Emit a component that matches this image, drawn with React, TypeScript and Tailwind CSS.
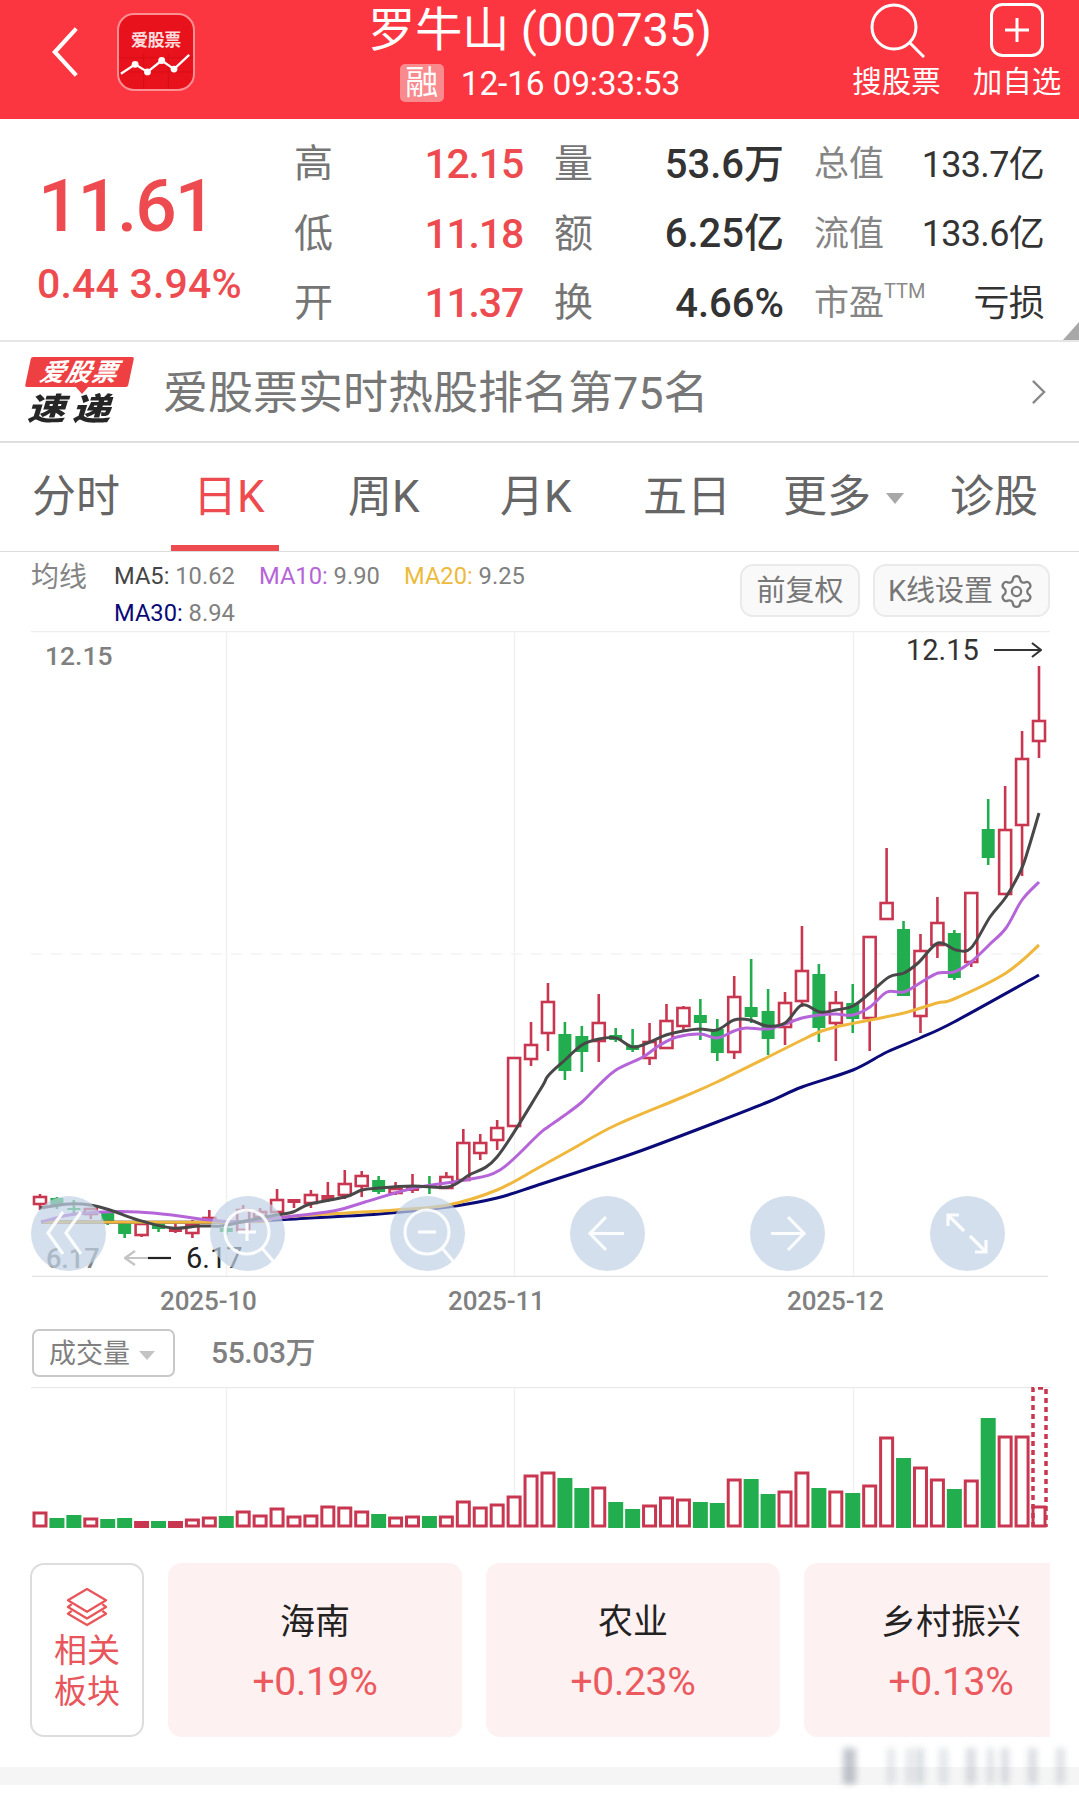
import React from "react";
import { Settings } from "lucide-react";

const RED = "#c93650";
const GREEN = "#22ae4e";

// [isRed, wickTop, wickBottom, bodyTop, bodyBottom, filled]
const candles: number[][] = [
  [1, 1194, 1210, 1197, 1204, 0],[0, 1197, 1209, 1198, 1206, 0],[0, 1200, 1215, 1208, 1210, 0],[1, 1208, 1219, 1209, 1214, 0],
  [0, 1212, 1225, 1213, 1221, 0],[0, 1222, 1238, 1223, 1234, 0],[1, 1223, 1237, 1224, 1235, 0],[0, 1222, 1232, 1224, 1229, 0],
  [1, 1223, 1233, 1227, 1232, 1],[1, 1220, 1238, 1225, 1233, 0],[1, 1210, 1223, 1218, 1222, 0],[0, 1227, 1235, 1228, 1232, 0],
  [1, 1205, 1230, 1210, 1230, 0],[1, 1208, 1222, 1212, 1217, 0],[1, 1189, 1213, 1200, 1212, 0],[1, 1199, 1208, 1199, 1203, 1],
  [1, 1190, 1208, 1195, 1203, 0],[1, 1182, 1202, 1195, 1200, 1],[1, 1170, 1199, 1184, 1195, 0],[1, 1171, 1197, 1176, 1186, 0],
  [0, 1176, 1194, 1180, 1192, 0],[1, 1182, 1195, 1189, 1193, 0],[1, 1174, 1193, 1187, 1191, 1],[0, 1176, 1194, 1186, 1188, 0],
  [1, 1172, 1188, 1177, 1188, 0],[1, 1129, 1180, 1143, 1180, 0],[1, 1134, 1160, 1143, 1153, 0],[1, 1120, 1150, 1128, 1140, 0],
  [1, 1058, 1126, 1058, 1126, 0],[1, 1022, 1066, 1045, 1059, 0],[1, 983, 1051, 1002, 1033, 0],[0, 1022, 1080, 1034, 1071, 0],
  [0, 1026, 1072, 1036, 1052, 0],[1, 994, 1062, 1023, 1041, 0],[0, 1028, 1042, 1035, 1040, 0],[0, 1029, 1052, 1045, 1050, 0],
  [1, 1023, 1065, 1042, 1058, 0],[1, 1004, 1048, 1021, 1048, 0],[1, 1006, 1030, 1008, 1026, 0],[0, 999, 1040, 1015, 1023, 0],
  [0, 1019, 1061, 1029, 1053, 0],[1, 976, 1059, 997, 1052, 0],[0, 959, 1023, 1007, 1017, 0],[0, 989, 1055, 1011, 1039, 0],
  [1, 992, 1045, 1003, 1027, 0],[1, 926, 1007, 971, 1001, 0],[0, 964, 1042, 974, 1028, 0],[1, 991, 1061, 1003, 1023, 0],
  [0, 984, 1033, 1003, 1019, 0],[1, 937, 1051, 937, 1018, 0],[1, 848, 919, 903, 919, 0],[0, 921, 996, 929, 996, 0],
  [1, 934, 1033, 951, 1016, 0],[1, 897, 958, 923, 945, 0],[0, 930, 980, 933, 978, 0],[1, 893, 967, 893, 962, 0],
  [0, 799, 865, 829, 858, 0],[1, 786, 894, 830, 894, 0],[1, 731, 876, 759, 825, 0],[1, 666, 758, 721, 741, 0],
];

const vols: number[][] = [
  [1,1513],[0,1518],[0,1515],[1,1519],[0,1519],[0,1518],[1,1521,1],[0,1521],[1,1521,1],[1,1520],
  [1,1518],[0,1516],[1,1512],[1,1516],[1,1509],[1,1517],[1,1516],[1,1507],[1,1508],[1,1512],
  [0,1514],[1,1518],[1,1517],[0,1516],[1,1517],[1,1502],[1,1508],[1,1505],[1,1497],[1,1476],
  [1,1473],[0,1478],[0,1488],[1,1488],[0,1502],[0,1509],[1,1506],[1,1498],[1,1500],[0,1502],
  [0,1503],[1,1480],[0,1479],[0,1494],[1,1492],[1,1473],[0,1488],[1,1492],[0,1493],[1,1486],
  [1,1438],[0,1458],[1,1468],[1,1480],[0,1489],[1,1481],[0,1418],[1,1437],[1,1437],[1,1507],
];

const xOf = (i: number) => 40 + (999 / 59) * i;

// Catmull-Rom through the sampled points, so the averages read as curves.
function smooth(raw: string) {
  const p = raw.split(" ").map((s) => s.split(",").map(Number));
  let d = `M${p[0][0]} ${p[0][1]}`;
  for (let i = 0; i < p.length - 1; i++) {
    const a = p[Math.max(0, i - 1)];
    const b = p[i];
    const c = p[i + 1];
    const e = p[Math.min(p.length - 1, i + 2)];
    const c1x = b[0] + (c[0] - a[0]) / 6;
    const c1y = b[1] + (c[1] - a[1]) / 6;
    const c2x = c[0] - (e[0] - b[0]) / 6;
    const c2y = c[1] - (e[1] - b[1]) / 6;
    d += ` C${c1x.toFixed(1)} ${c1y.toFixed(1)} ${c2x.toFixed(1)} ${c2y.toFixed(1)} ${c[0]} ${c[1]}`;
  }
  return d;
}

const ma5 = "40,1208 69,1204 90,1205 110,1210 138,1220 172,1228 200,1226 221,1226 241,1222 276,1215 293,1212 310,1204 345,1197 362,1190 379,1188 413,1186 448,1187 469,1175 497,1157 540,1090 548,1076 565,1060 582,1045 599,1039 616,1038 633,1047 650,1042 666,1035 683,1031 700,1029 717,1030 734,1020 750,1020 767,1026 785,1023 802,1005 820,1012 836,1010 853,1006 870,993 889,977 904,973 918,963 938,943 956,950 971,948 990,917 1006,897 1021,870 1028,850 1039,813";
const ma10 = "41,1222 69,1215 103,1212 138,1212 172,1215 200,1219 241,1222 276,1218 303,1215 338,1210 365,1202 414,1188 465,1180 500,1170 538,1135 548,1127 565,1115 582,1102 599,1085 616,1070 643,1057 660,1045 677,1037 700,1034 717,1038 734,1031 746,1028 767,1029 785,1024 802,1018 819,1015 836,1014 853,1015 870,1007 887,992 904,992 920,983 938,973 954,972 971,962 989,945 1006,928 1022,900 1039,882";
const ma20 = "41,1222 241,1222 276,1218 310,1215 362,1212 396,1210 448,1205 497,1190 538,1168 574,1148 616,1125 683,1097 717,1082 768,1057 802,1040 819,1032 836,1027 870,1020 904,1013 937,1003 954,999 1006,973 1039,945";
const ma30 = "41,1222 224,1222 310,1218 379,1214 448,1207 497,1198 538,1185 590,1168 643,1150 717,1122 768,1102 802,1087 853,1070 887,1052 920,1038 954,1022 1039,975";

const circles: { x: number; kind: string }[] = [
  { x: 68, kind: "double" },
  { x: 247, kind: "plus" },
  { x: 427, kind: "minus" },
  { x: 607, kind: "left" },
  { x: 787, kind: "right" },
  { x: 967, kind: "expand" },
];

function CircleGlyph({ kind }: { kind: string }) {
  const c = { fill: "none", stroke: "#ffffff", strokeWidth: 3.2, strokeOpacity: 0.9 } as const;
  return (
    <svg viewBox="0 0 75 75" className="h-full w-full">
      {kind === "double" && (
        <>
          <path d="M32 16 L17 37 L32 58" {...c} />
          <path d="M50 16 L35 37 L50 58" {...c} />
        </>
      )}
      {(kind === "plus" || kind === "minus") && (
        <>
          <circle cx="37" cy="36" r="22" {...c} />
          <path d="M52 52 L63 65" {...c} />
          <path d="M28 36 H46" {...c} />
          {kind === "plus" && <path d="M37 27 V45" {...c} />}
        </>
      )}
      {kind === "left" && <path d="M54 37.5 H21 M36 21 L20 37.5 L36 54" {...c} />}
      {kind === "right" && <path d="M21 37.5 H54 M38 21 L54 37.5 L38 54" {...c} />}
      {kind === "expand" && (
        <path d="M18 30 V19 H29 M19 20 L34 35 M56 44 V56 H45 M55 55 L40 40" {...c} />
      )}
    </svg>
  );
}

const CJK = "font-['Roboto','Noto_Sans_CJK_SC',sans-serif]";

type Stat = { l: string; v: string; sup?: string };
const cols: { ls: string; vs: string; vc: string; w: string; ml: string; rows: Stat[] }[] = [
  {
    ls: "text-[39px] text-[#757575]", vs: "text-[41px] tracking-[-1.2px] font-medium", vc: "text-[#ee4b50]", w: "w-[229px]", ml: "",
    rows: [{ l: "高", v: "12.15" }, { l: "低", v: "11.18" }, { l: "开", v: "11.37" }],
  },
  {
    ls: "text-[39px] text-[#757575]", vs: "text-[40px] font-medium", vc: "text-[#333333]", w: "w-[230px]", ml: "ml-[31px]",
    rows: [{ l: "量", v: "53.6万" }, { l: "额", v: "6.25亿" }, { l: "换", v: "4.66%" }],
  },
  {
    ls: "text-[35px] text-[#858585]", vs: "text-[36px] tracking-[-0.7px]", vc: "text-[#333333]", w: "w-[230px]", ml: "ml-[30px]",
    rows: [{ l: "总值", v: "133.7亿" }, { l: "流值", v: "133.6亿" }, { l: "市盈", v: "亏损", sup: "TTM" }],
  },
];

const tabs: { t: string; w: string; active?: boolean; caret?: boolean }[] = [
  { t: "分时", w: "w-[161px]" },
  { t: "日K", w: "w-[155px]", active: true },
  { t: "周K", w: "w-[152px]" },
  { t: "月K", w: "w-[143px]" },
  { t: "五日", w: "w-[140px]" },
  { t: "更多", w: "w-[167px]", caret: true },
  { t: "诊股", w: "w-[87px]" },
];

const cards = [
  { n: "海南", p: "+0.19%", w: "w-[294px] min-w-[294px]" },
  { n: "农业", p: "+0.23%", w: "w-[294px] min-w-[294px]" },
  { n: "乡村振兴", p: "+0.13%", w: "w-[294px] min-w-[294px]" },
];

const blurs = [
  { x: "left-[843px]", w: "w-[13px]", d: "bg-gray-500/40" },
  { x: "left-[887px]", w: "w-[8px]", d: "bg-gray-400/25" },
  { x: "left-[906px]", w: "w-[8px]", d: "bg-gray-400/25" },
  { x: "left-[916px]", w: "w-[8px]", d: "bg-gray-400/35" },
  { x: "left-[939px]", w: "w-[9px]", d: "bg-gray-400/25" },
  { x: "left-[966px]", w: "w-[10px]", d: "bg-gray-400/35" },
  { x: "left-[987px]", w: "w-[7px]", d: "bg-gray-400/30" },
  { x: "left-[1001px]", w: "w-[8px]", d: "bg-gray-400/35" },
  { x: "left-[1028px]", w: "w-[9px]", d: "bg-gray-400/35" },
  { x: "left-[1056px]", w: "w-[9px]", d: "bg-gray-400/30" },
];

export default function App() {
  return (
    <div className={`relative h-[1794px] w-[1079px] overflow-hidden bg-white ${CJK}`}>
      {/* Header */}
      <header className="flex h-[119px] items-start bg-[#fb3640] text-white">
        <svg viewBox="0 0 30 54" className="ml-[52px] mt-[26px] h-[52px] w-[28px]" fill="none" stroke="#fff" strokeWidth="4.4">
          <path d="M26 2 L3 27 L26 52" />
        </svg>
        <div className="relative ml-[37px] mt-[13px] h-[78px] w-[78px] overflow-hidden rounded-[17px] border-[2.5px] border-[#fb8f93] bg-[#e8121c]">
          <div className="pt-[13px] text-center text-[17px] font-bold leading-[24px] tracking-[-0.3px] text-[#fbdcdc]">爱股票</div>
          <svg viewBox="0 0 78 78" className="absolute inset-0 h-full w-full" fill="none">
            <path d="M0 60 H78 M0 45 H78 M26 40 V78 M52 40 V78" stroke="#d60e18" strokeWidth="1" />
            <path d="M2 62 L17 52 L30 60 L45 48 L58 57 L74 42" stroke="#fff" strokeWidth="2.4" />
            <circle cx="17" cy="52" r="3.6" fill="#fff" />
            <circle cx="30" cy="60" r="3.6" fill="#fff" />
            <circle cx="45" cy="48" r="3.6" fill="#fff" />
            <circle cx="58" cy="57" r="3.6" fill="#fff" />
          </svg>
        </div>
        <div className="ml-[145px] flex w-[400px] flex-col items-center">
          <div className="whitespace-nowrap text-[47px] leading-[60px]">罗牛山 (000735)</div>
          <div className="mt-[2px] flex items-center">
            <span className="flex h-[38px] w-[44px] items-center justify-center rounded-[5px] bg-[#f98a8e] text-[33px] leading-none">融</span>
            <span className="ml-[17px] mt-[3px] text-[33.5px] leading-[38px] tracking-[-0.2px]">12-16 09:33:53</span>
          </div>
        </div>
        <div className="ml-[112px] flex w-[89px] flex-col items-center">
          <svg viewBox="0 0 56 56" className="mt-[2px] h-[56px] w-[56px]" fill="none" stroke="#fff" strokeWidth="3">
            <circle cx="25" cy="25" r="22" />
            <path d="M41 41 L55 55" />
          </svg>
          <span className="mt-[5px] whitespace-nowrap text-[29.5px] leading-[38px]">搜股票</span>
        </div>
        <div className="ml-[32px] flex w-[88px] flex-col items-center">
          <svg viewBox="0 0 56 56" className="mt-[2px] h-[56px] w-[56px]" fill="none" stroke="#fff" strokeWidth="3">
            <rect x="2.5" y="2.5" width="51" height="51" rx="11" />
            <path d="M28 16 V40 M16 28 H40" />
          </svg>
          <span className="mt-[5px] whitespace-nowrap text-[29.5px] leading-[38px]">加自选</span>
        </div>
      </header>

      {/* Quote */}
      <section className="relative flex h-[223px] border-b-2 border-[#e6e6e6]">
        <div className="w-[294px] pl-[37px]">
          <div className="mt-[42px] pl-[1px] text-[73px] font-medium leading-[90px] tracking-[-2px] text-[#ee4b50]">11.61</div>
          <div className="mt-[8px] whitespace-nowrap text-[41px] font-medium leading-[50px] tracking-[0.2px] text-[#ee4b50]">0.44 3.94%</div>
        </div>
        <div className="flex pt-[11px]">
          {cols.map((c, i) => (
            <div key={i} className={`${c.w} ${c.ml} flex flex-col`}>
              {c.rows.map((r) => (
                <div key={r.l} className="flex h-[69.5px] items-center justify-between whitespace-nowrap">
                  <span className={`${c.ls} leading-none`}>
                    {r.l}
                    {r.sup && <sup className="relative top-[-5px] align-top text-[20px] leading-none text-[#8a8a8a]">{r.sup}</sup>}
                  </span>
                  <span className={`${c.vs} ${c.vc} leading-none`}>{r.v}</span>
                </div>
              ))}
            </div>
          ))}
        </div>
        <div className="absolute bottom-0 right-0 h-0 w-0 border-b-[18px] border-l-[16px] border-b-[#a8a8a8] border-l-transparent" />
      </section>

      {/* Banner */}
      <section className="flex h-[101px] items-center border-b-2 border-[#dedede]">
        <div className="relative ml-[27px] h-[70px] w-[104px]">
          <div className="absolute left-[1px] top-0 flex h-[30px] w-[103px] -skew-x-12 items-center justify-center rounded-[2px] bg-[#ee3f42]">
            <span className="text-[25px] font-bold italic leading-none tracking-[1px] text-white">爱股票</span>
          </div>
          <div className="absolute left-[48px] top-[29px] h-0 w-0 border-l-[7px] border-r-[7px] border-t-[8px] border-l-transparent border-r-transparent border-t-[#ee3f42]" />
          <div className="absolute left-0 top-[37px] origin-top scale-y-[0.82] whitespace-nowrap text-[38px] font-black italic leading-[38px] tracking-[7px] text-[#262626]">速递</div>
        </div>
        <span className="ml-[32px] mt-[4px] whitespace-nowrap text-[45px] leading-none text-[#777777]">爱股票实时热股排名第75名</span>
        <svg viewBox="0 0 16 28" className="ml-[322px] h-[26px] w-[15px]" fill="none" stroke="#8a8a8a" strokeWidth="2.6">
          <path d="M2 2 L14 14 L2 26" />
        </svg>
      </section>

      {/* Tabs */}
      <nav className="flex h-[109px] border-b border-[#dcdcdc] pl-[32px] pt-[14px]">
        {tabs.map((t) => (
          <div key={t.t} className={`${t.w} relative flex items-start`}>
            <span className={`whitespace-nowrap text-[44px] leading-[80px] ${t.active ? "text-[#ee4b50]" : "text-[#666666]"}`}>{t.t}</span>
            {t.caret && (
              <span className="ml-[15px] mt-[36px] h-0 w-0 border-l-[9px] border-r-[9px] border-t-[11px] border-l-transparent border-r-transparent border-t-[#a8a8a8]" />
            )}
            {t.active && <span className="absolute left-[-22px] top-[88px] h-[6px] w-[108px] bg-[#ee4b50]" />}
          </div>
        ))}
      </nav>

      {/* MA legend */}
      <section className="flex h-[79px] items-start pl-[31px] pr-[29px]">
        <span className="mt-[8px] text-[28px] leading-[36px] text-[#858585]">均线</span>
        <div className="ml-[27px] mt-[6px] w-[450px] text-[23.7px] leading-[37px] text-[#808080]">
          <div className="flex whitespace-nowrap">
            <span className="w-[145px]"><span className="text-[#444444]">MA5:</span> 10.62</span>
            <span className="w-[145px]"><span className="text-[#b565d8]">MA10:</span> 9.90</span>
            <span><span className="text-[#ecbb3e]">MA20:</span> 9.25</span>
          </div>
          <div className="whitespace-nowrap"><span className="text-[#0a0a78]">MA30:</span> 8.94</div>
        </div>
        <div className="ml-auto mt-[12px] flex gap-[13px]">
          <span className="flex h-[53px] w-[120px] items-center justify-center rounded-[13px] border-2 border-[#eaeaea] bg-[#f9f9f9] pt-[2px] text-[29px] leading-none text-[#777777]">前复权</span>
          <span className="flex h-[53px] w-[177px] items-center justify-center gap-[5px] rounded-[13px] border-2 border-[#eaeaea] bg-[#f9f9f9] pt-[2px] text-[29px] leading-none text-[#777777]">
            K线设置
            <Settings className="h-[37px] w-[37px] text-[#7a7a7a]" strokeWidth={1.5} />
          </span>
        </div>
      </section>

      {/* K chart */}
      <section className="relative h-[646px]">
        <svg viewBox="0 631 1079 646" className="block h-full w-full" fill="none">
          <path d="M31 631.500 H1050" stroke="#eeeeee" strokeWidth="1.500" />
          <path d="M226.500 632 V1277 M514.500 632 V1277 M853.500 632 V1277" stroke="#f1f1f1" strokeWidth="1.500" />
          <path d="M31 954 H1050" stroke="#f3f3f3" strokeWidth="1.500" strokeDasharray="11 9" />
          <path d="M32 1276.500 H1048" stroke="#e2e2e2" strokeWidth="1.500" />
          {candles.map((c, i) => {
            const [isRed, wt, wb, bt, bb, filled] = c;
            const x = xOf(i);
            const col = isRed ? RED : GREEN;
            return (
              <g key={i}>
                <path d={`M${x} ${wt} V${wb}`} stroke={col} strokeWidth="2.600" />
                {isRed && !filled ? (
                  <rect x={x - 6} y={bt} width={12} height={Math.max(bb - bt, 3)} fill="#ffffff" stroke={col} strokeWidth="2.600" />
                ) : (
                  <rect x={x - 6.500} y={bt} width={13} height={Math.max(bb - bt, 2)} fill={col} />
                )}
              </g>
            );
          })}
          <path d={smooth(ma30)} stroke="#0a0a78" strokeWidth="3" />
          <path d={smooth(ma20)} stroke="#efb73c" strokeWidth="3" />
          <path d={smooth(ma10)} stroke="#b565d8" strokeWidth="3" />
          <path d={smooth(ma5)} stroke="#484848" strokeWidth="3" />
        </svg>
        <span className="absolute left-[45px] top-[9px] text-[26.5px] font-medium leading-[32px] text-[#808080]">12.15</span>
        <div className="absolute left-[906px] top-[2px] flex items-center text-[29px] leading-[34px] text-[#333333]">
          12.15
          <svg viewBox="0 0 48 18" className="ml-[15px] h-[18px] w-[48px]" fill="none" stroke="#333333" strokeWidth="2.200">
            <path d="M0 9 H46 M38 2 L47 9 L38 16" />
          </svg>
        </div>
        <span className="absolute left-[46px] top-[612px] text-[27px] font-medium leading-[32px] text-[#808080]">6.17</span>
        <div className="absolute left-[124px] top-[610px] flex items-center text-[29px] leading-[34px] text-[#222222]">
          <svg viewBox="0 0 48 18" className="mr-[14px] h-[18px] w-[48px]" fill="none" strokeWidth="2.200">
            <path d="M47 9 H24" stroke="#222222" />
            <path d="M24 9 H2 M11 2 L1 9 L11 16" stroke="#c4c4c4" />
          </svg>
          6.17
        </div>
        {circles.map((c) => (
          <div
            key={c.x}
            className="absolute top-[565px] h-[75px] w-[75px] rounded-full bg-[#c0d1e4]/70"
            style={{ left: c.x - 37.5 }}
          >
            <CircleGlyph kind={c.kind} />
          </div>
        ))}
      </section>

      {/* Date axis */}
      <div className="flex h-[48px] items-center whitespace-nowrap pl-[160px] text-[26px] font-medium leading-none tracking-[-0.1px] text-[#808080]">
        <span className="w-[288px]">2025-10</span>
        <span className="w-[339px]">2025-11</span>
        <span>2025-12</span>
      </div>

      {/* Volume header */}
      <div className="flex h-[62px] items-start pl-[32px] pt-[4px]">
        <div className="flex h-[48px] w-[143px] items-center rounded-[7px] border-2 border-[#c8c8c8] pl-[15px] pt-[2px] text-[27px] leading-none text-[#808080]">
          成交量
          <span className="ml-[9px] mt-[3px] h-0 w-0 border-l-[8px] border-r-[8px] border-t-[9px] border-l-transparent border-r-transparent border-t-[#c4c4c4]" />
        </div>
        <span className="ml-[36px] mt-[6px] text-[30px] font-medium leading-[36px] tracking-[-0.4px] text-[#808080]">55.03万</span>
      </div>

      {/* Volume chart */}
      <svg viewBox="0 1387 1079 143" className="block h-[143px] w-[1079px]" fill="none">
        <path d="M31 1387.500 H1050" stroke="#e9e9e9" strokeWidth="1.500" />
        <path d="M226.500 1388 V1528 M514.500 1388 V1528 M853.500 1388 V1528" stroke="#f1f1f1" strokeWidth="1.500" />
        {vols.map(([isRed, top, filled], i) => {
          const x = xOf(i);
          if (!isRed || filled) {
            return <rect key={i} x={x - 7.500} y={top} width={15} height={1528 - top} fill={isRed ? RED : GREEN} />;
          }
          return <rect key={i} x={x - 6} y={top} width={12} height={1526 - top} fill="#ffffff" stroke={RED} strokeWidth="3" />;
        })}
        <path d="M1033 1527 V1388 H1046 V1527" stroke={RED} strokeWidth="3.500" strokeDasharray="5 4" />
      </svg>

      {/* Related */}
      <section className="mt-[33px] flex h-[174px] w-[1050px] gap-[24px] overflow-hidden pl-[30px]">
        <div className="flex h-[174px] w-[114px] min-w-[114px] flex-col items-center rounded-[14px] border-2 border-[#dddddd] pt-[22px] text-[#e8565c]">
          <svg viewBox="0 0 44 42" className="h-[40px] w-[44px]" fill="none" stroke="#e8565c" strokeWidth="2.400" strokeLinejoin="round">
            <path d="M22 2 L42 14 L22 26 L2 14 Z" />
            <path d="M6 18 L2 21 L22 33 L42 21 L38 18" />
            <path d="M6 25 L2 28 L22 40 L42 28 L38 25" />
          </svg>
          <span className="mt-[3px] w-[66px] text-center text-[33px] leading-[41px]">相关板块</span>
        </div>
        {cards.map((c) => (
          <div key={c.n} className={`${c.w} flex flex-col items-center rounded-[14px] bg-[#fef1f1]`}>
            <span className="mt-[38px] text-[35px] leading-[44px] text-[#222222]">{c.n}</span>
            <span className="mt-[15px] text-[39px] leading-[44px] tracking-[-0.3px] text-[#ea5a5e]">{c.p}</span>
          </div>
        ))}
      </section>

      {/* Footer band */}
      <div className="mt-[30px] h-[18px] bg-[#f5f5f5]" />

      {/* Watermark smear */}
      {blurs.map((b) => (
        <div key={b.x} className={`absolute top-[1748px] h-[36px] ${b.x} ${b.w} ${b.d} blur-[3px]`} />
      ))}
    </div>
  );
}
